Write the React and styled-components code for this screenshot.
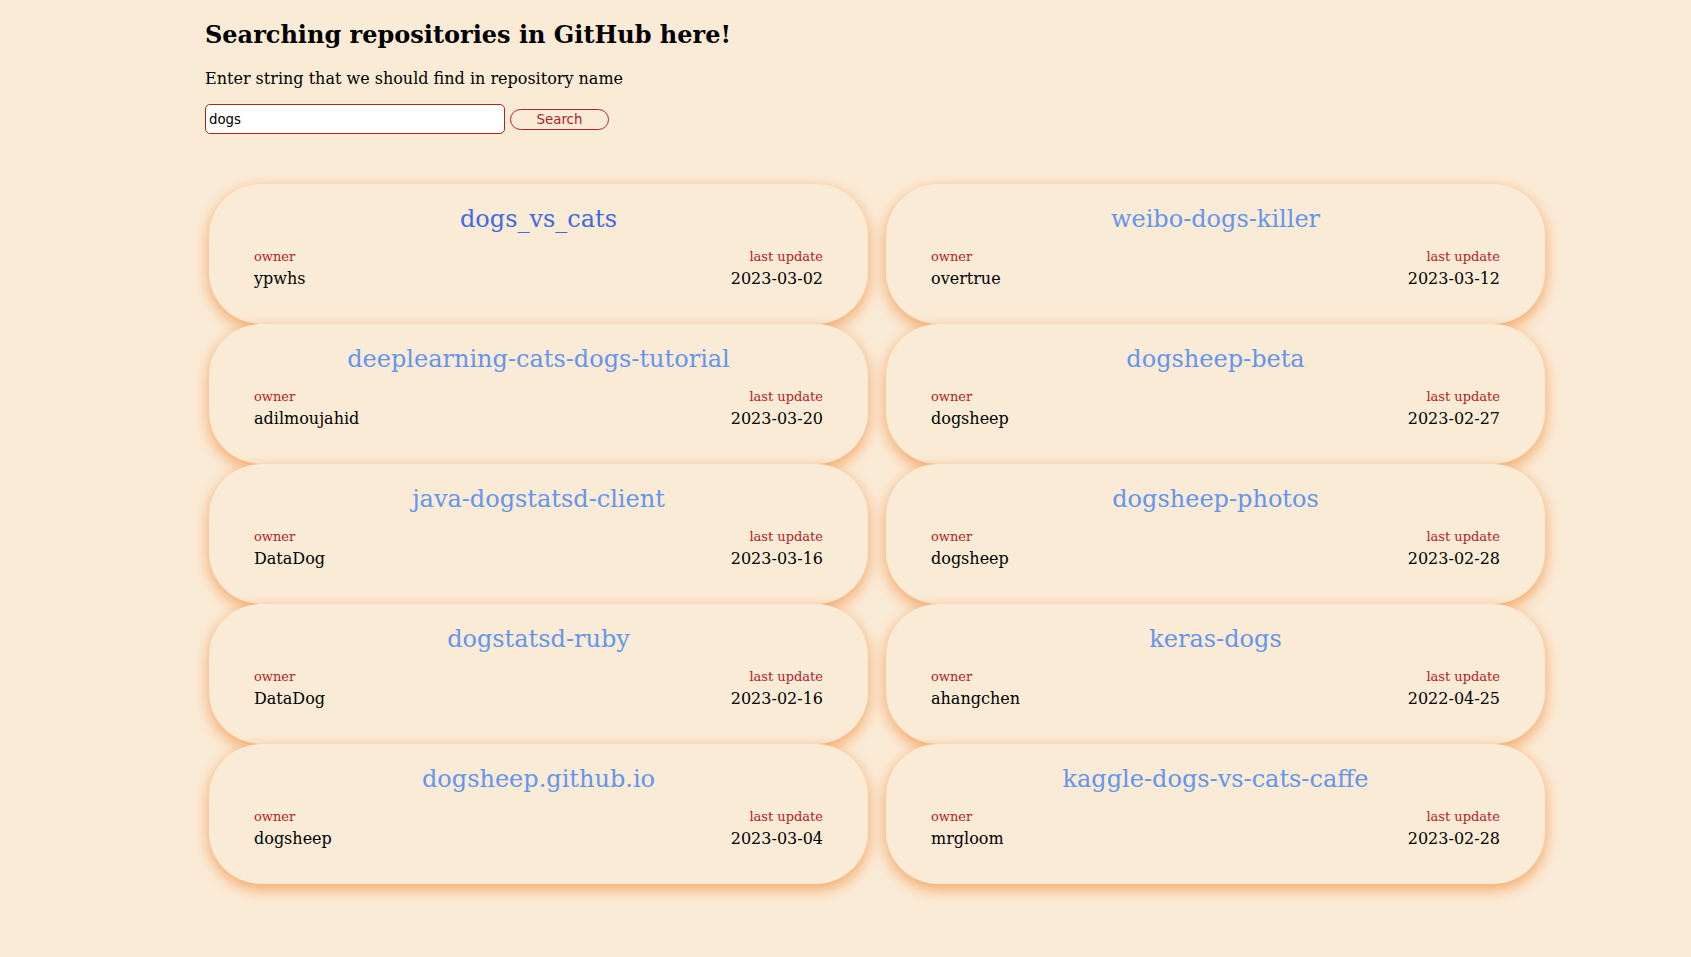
import React, { useState } from "react";
import styled, { createGlobalStyle } from "styled-components";

const repos = [
  { name: "dogs_vs_cats", owner: "ypwhs", updated: "2023-03-02", active: true },
  { name: "weibo-dogs-killer", owner: "overtrue", updated: "2023-03-12" },
  { name: "deeplearning-cats-dogs-tutorial", owner: "adilmoujahid", updated: "2023-03-20" },
  { name: "dogsheep-beta", owner: "dogsheep", updated: "2023-02-27" },
  { name: "java-dogstatsd-client", owner: "DataDog", updated: "2023-03-16" },
  { name: "dogsheep-photos", owner: "dogsheep", updated: "2023-02-28" },
  { name: "dogstatsd-ruby", owner: "DataDog", updated: "2023-02-16" },
  { name: "keras-dogs", owner: "ahangchen", updated: "2022-04-25" },
  { name: "dogsheep.github.io", owner: "dogsheep", updated: "2023-03-04" },
  { name: "kaggle-dogs-vs-cats-caffe", owner: "mrgloom", updated: "2023-02-28" },
];

const App = () => {
  const [query, setQuery] = useState("dogs");

  return (
    <>
      <GlobalStyle />
      <Page>
        <Heading>Searching repositories in GitHub here!</Heading>
        <Hint>Enter string that we should find in repository name</Hint>
        <SearchRow>
          <SearchInput
            type="text"
            value={query}
            onChange={(e) => setQuery(e.target.value)}
          />
          <SearchButton type="button">Search</SearchButton>
        </SearchRow>
        <RepoGrid>
          {repos.map((repo) => (
            <RepoCard key={repo.name}>
              <RepoName $active={repo.active}>{repo.name}</RepoName>
              <InfoRow>
                <InfoCol>
                  <Label>owner</Label>
                  <Value>{repo.owner}</Value>
                </InfoCol>
                <InfoCol $right>
                  <Label>last update</Label>
                  <Value>{repo.updated}</Value>
                </InfoCol>
              </InfoRow>
            </RepoCard>
          ))}
        </RepoGrid>
      </Page>
    </>
  );
};

const GlobalStyle = createGlobalStyle`
  html, body {
    margin: 0;
    background-color: antiquewhite;
    font-family: "DejaVu Serif", serif;
  }
`;

const Page = styled.div`
  padding: 21px 0 60px 205px;
  min-height: 957px;
  box-sizing: border-box;
`;

const Heading = styled.h2`
  margin: 0;
  font-size: 24px;
  line-height: 28px;
  font-weight: bold;
  color: #000;
`;

const Hint = styled.p`
  margin: 20px 0 0;
  font-size: 16px;
  line-height: 19px;
  color: #000;
`;

const SearchRow = styled.div`
  display: flex;
  align-items: center;
  gap: 5px;
  margin-top: 16px;
`;

const SearchInput = styled.input`
  width: 300px;
  height: 30px;
  box-sizing: border-box;
  padding: 2px 3px;
  border: 1px solid firebrick;
  border-radius: 5px;
  background: #fff;
  font-family: "DejaVu Sans", sans-serif;
  font-size: 13.33px;
  color: #000;
  outline: none;
`;

const SearchButton = styled.button`
  width: 99px;
  height: 21px;
  box-sizing: border-box;
  padding: 0;
  border: 1px solid firebrick;
  border-radius: 11px;
  background: transparent;
  font-family: "DejaVu Sans", sans-serif;
  font-size: 13.33px;
  color: firebrick;
  cursor: pointer;
`;

const RepoGrid = styled.div`
  display: grid;
  grid-template-columns: 659px 659px;
  column-gap: 18px;
  margin: 50px 0 0 4px;
`;

const RepoCard = styled.div`
  height: 140px;
  box-sizing: border-box;
  padding: 21px 45px;
  border-radius: 52px;
  background-color: antiquewhite;
  box-shadow: 0 5px 15px sandybrown;
`;

const RepoName = styled.div`
  text-align: center;
  font-size: 24px;
  line-height: 28px;
  color: ${(p) => (p.$active ? "royalblue" : "cornflowerblue")};
  cursor: pointer;
`;

const InfoRow = styled.div`
  display: flex;
  justify-content: space-between;
  margin-top: 16px;
`;

const InfoCol = styled.div`
  display: flex;
  flex-direction: column;
  align-items: ${(p) => (p.$right ? "flex-end" : "flex-start")};
`;

const Label = styled.span`
  font-size: 13px;
  line-height: 15px;
  color: firebrick;
`;

const Value = styled.span`
  margin-top: 5px;
  font-size: 16px;
  line-height: 19px;
  color: #000;
`;

export default App;
